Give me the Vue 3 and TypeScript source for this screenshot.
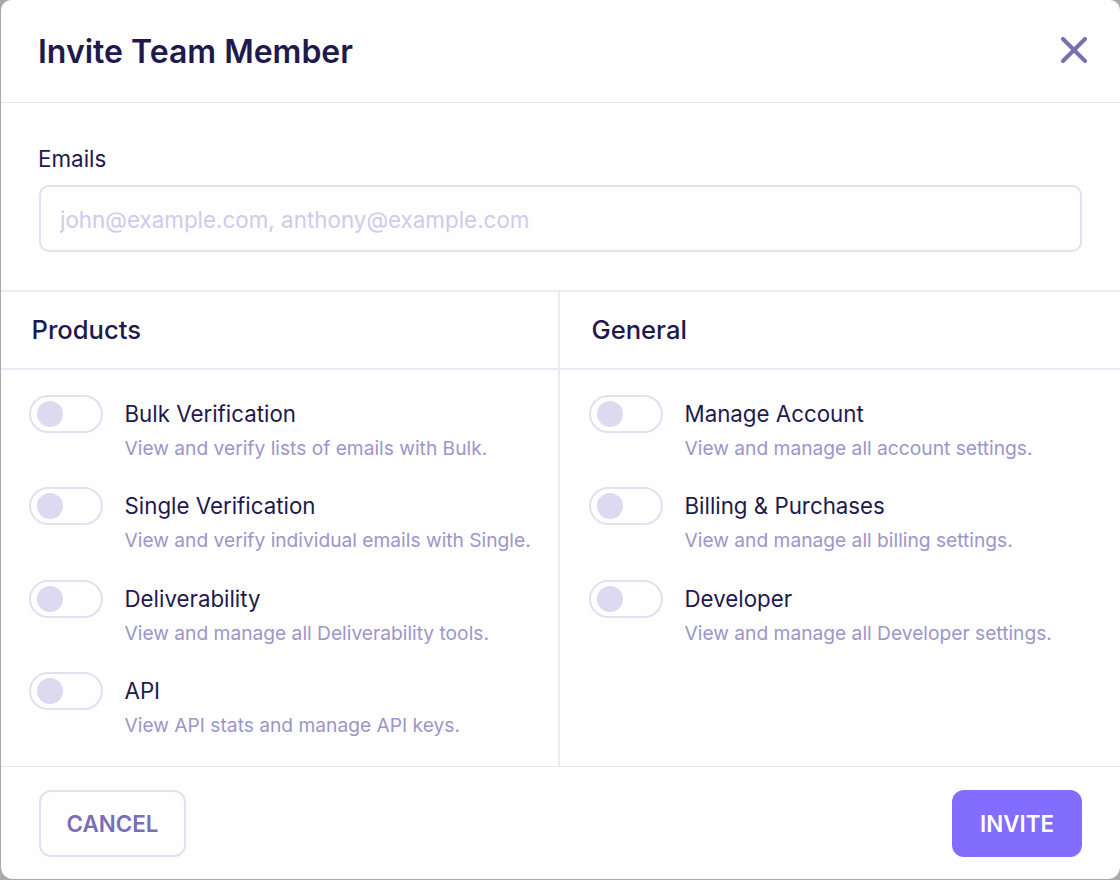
<script setup lang="ts">
interface Permission {
  title: string
  description: string
}

const products: Permission[] = [
  { title: 'Bulk Verification', description: 'View and verify lists of emails with Bulk.' },
  { title: 'Single Verification', description: 'View and verify individual emails with Single.' },
  { title: 'Deliverability', description: 'View and manage all Deliverability tools.' },
  { title: 'API', description: 'View API stats and manage API keys.' }
]

const general: Permission[] = [
  { title: 'Manage Account', description: 'View and manage all account settings.' },
  { title: 'Billing & Purchases', description: 'View and manage all billing settings.' },
  { title: 'Developer', description: 'View and manage all Developer settings.' }
]

const columns = [
  { name: 'Products', items: products },
  { name: 'General', items: general }
]
</script>

<template>
  <div class="modal">
    <header class="modal-header">
      <h1>Invite Team Member</h1>
      <button type="button" class="close" aria-label="Close">
        <svg width="26" height="26" viewBox="0 0 26 26" fill="none" stroke="currentColor" stroke-width="4" stroke-linecap="round">
          <path d="M2 2 L24 24 M24 2 L2 24" />
        </svg>
      </button>
    </header>

    <section class="emails">
      <label for="emails">Emails</label>
      <input id="emails" type="text" placeholder="john@example.com, anthony@example.com" />
    </section>

    <section class="permissions">
      <div v-for="column in columns" :key="column.name" class="column">
        <h2>{{ column.name }}</h2>
        <ul>
          <li v-for="item in column.items" :key="item.title">
            <span class="toggle"><span class="knob"></span></span>
            <div class="text">
              <strong>{{ item.title }}</strong>
              <small>{{ item.description }}</small>
            </div>
          </li>
        </ul>
      </div>
    </section>

    <footer class="modal-footer">
      <button type="button" class="btn cancel">CANCEL</button>
      <button type="button" class="btn invite">INVITE</button>
    </footer>
  </div>
</template>

<style>
html,
body {
  margin: 0;
  background: #a9a9ab;
}
</style>

<style scoped>
.modal {
  box-sizing: border-box;
  width: 1119px;
  height: 879px;
  margin-left: 1px;
  border-radius: 10px 10px 12px 12px;
  background: #fefefe;
  color: #1e1a4d;
  font-family: Inter, 'Liberation Sans', sans-serif;
  display: flex;
  flex-direction: column;
}

.modal-header {
  height: 102px;
  padding: 2px 33px 0 37px;
  box-sizing: border-box;
  display: flex;
  align-items: center;
  justify-content: space-between;
  flex: none;
}

h1 {
  margin: 0;
  font-size: 32px;
  font-weight: 600;
  line-height: 1;
}

.close {
  width: 26px;
  height: 26px;
  margin-bottom: 5px;
  padding: 0;
  border: 0;
  background: none;
  color: #7a6fb3;
  display: block;
}

.close svg {
  display: block;
}

.emails {
  flex: none;
  box-sizing: border-box;
  height: 190px;
  padding: 43px 38px 0 38px;
  border-top: 1px solid #e9e6f8;
  border-bottom: 2px solid #ecebf5;
}

.emails label {
  display: block;
  margin: 0 0 13px -1px;
  font-size: 22.4px;
  line-height: 26px;
}

.emails input {
  box-sizing: border-box;
  display: block;
  width: 100%;
  height: 67px;
  padding: 2px 20px 0 19px;
  border: 2px solid #e3e0f2;
  border-radius: 10px;
  background: #fefefe;
  font: 400 22.4px Inter, 'Liberation Sans', sans-serif;
}

.emails input::placeholder {
  color: #cfcbea;
  opacity: 1;
}

.permissions {
  flex: 1;
  min-height: 0;
  display: grid;
  grid-template-columns: 559px 1fr;
}

.column:first-child {
  border-right: 2px solid #ecebf5;
}

h2 {
  box-sizing: border-box;
  height: 78px;
  margin: 0;
  padding-left: 30.5px;
  border-bottom: 2px solid #ecebf5;
  font-size: 25.6px;
  font-weight: 500;
  line-height: 75px;
}

.column:last-child h2 {
  padding-left: 31.5px;
}

ul {
  list-style: none;
  margin: 0;
  padding: 25px 0 0 28px;
  display: flex;
  flex-direction: column;
  gap: 27.35px;
}

.column:last-child ul {
  padding-left: 29px;
}

li {
  display: flex;
  gap: 21.5px;
}

.toggle {
  box-sizing: border-box;
  flex: none;
  width: 74px;
  height: 38px;
  padding: 4px 6px;
  border: 2px solid #e3e0f2;
  border-radius: 19px;
  background: #fefefe;
}

.knob {
  display: block;
  width: 26px;
  height: 26px;
  border-radius: 50%;
  background: #dcd9f0;
}

.text {
  display: flex;
  flex-direction: column;
  gap: 3px;
}

strong {
  font-size: 22.3px;
  font-weight: 420;
  line-height: 38px;
}

small {
  color: #9c96c9;
  font-size: 19.2px;
  line-height: 24px;
}

.modal-footer {
  flex: none;
  box-sizing: border-box;
  height: 113px;
  padding: 23px 38px 0 38px;
  border-top: 1px solid #e9e6f8;
  display: flex;
  justify-content: space-between;
  align-items: flex-start;
}

.btn {
  box-sizing: border-box;
  height: 67px;
  border-radius: 12px;
  font: 600 22.4px Inter, 'Liberation Sans', sans-serif;
  padding: 0;
}

.cancel {
  width: 147px;
  border: 2px solid #e3e0f2;
  background: #fefefe;
  color: #7a6fb3;
}

.invite {
  width: 130px;
  border: 0;
  background: #836dff;
  color: #fff;
}
</style>
